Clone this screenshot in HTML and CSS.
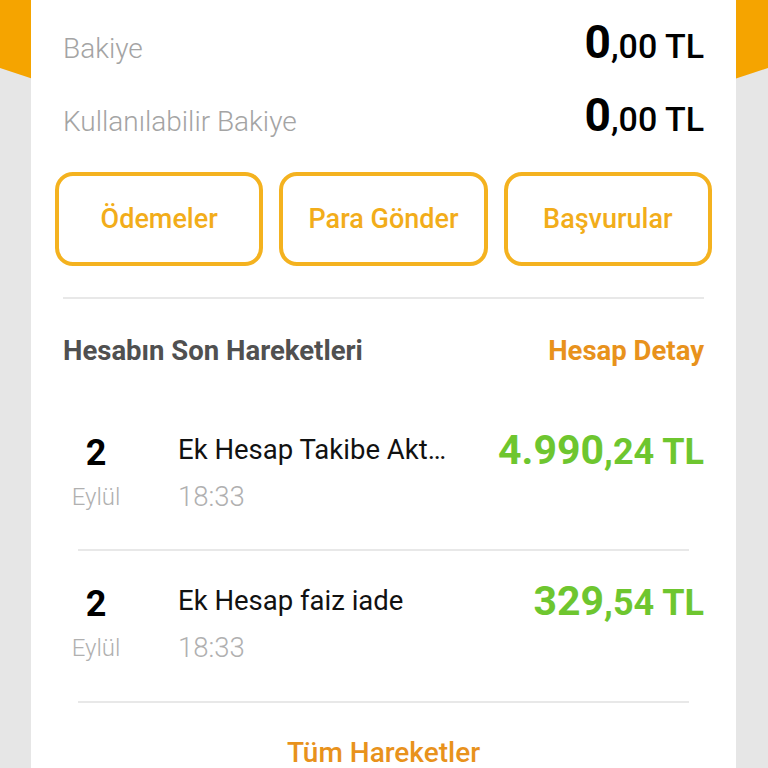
FILE: index.html
```html
<!DOCTYPE html>
<html lang="tr">
<head>
  <meta charset="UTF-8">
  <meta name="viewport" content="width=device-width, initial-scale=1.0">
  <title>Hesabım</title>
  <link rel="stylesheet" href="styles.css">
</head>
<body>
  <div class="band"></div>
  <div class="card">
    <div class="balance-row">
      <span class="label">Bakiye</span>
      <span class="amount"><span class="int">0</span>,00 TL</span>
    </div>
    <div class="balance-row">
      <span class="label">Kullanılabilir Bakiye</span>
      <span class="amount"><span class="int">0</span>,00 TL</span>
    </div>

    <div class="actions">
      <button class="action-btn">Ödemeler</button>
      <button class="action-btn">Para Gönder</button>
      <button class="action-btn">Başvurular</button>
    </div>

    <div class="divider"></div>

    <div class="section-head">
      <span class="section-title">Hesabın Son Hareketleri</span>
      <a class="link" href="#">Hesap Detay</a>
    </div>

    <div class="tx">
      <div class="tx-date">
        <div class="day">2</div>
        <div class="month">Eylül</div>
      </div>
      <div class="tx-info">
        <div class="tx-name">Ek Hesap Takibe Akt…</div>
        <div class="tx-time">18:33</div>
      </div>
      <div class="tx-amount"><span class="int">4.990</span>,24 TL</div>
    </div>
    <div class="tx-sep"></div>
    <div class="tx">
      <div class="tx-date">
        <div class="day">2</div>
        <div class="month">Eylül</div>
      </div>
      <div class="tx-info">
        <div class="tx-name">Ek Hesap faiz iade</div>
        <div class="tx-time">18:33</div>
      </div>
      <div class="tx-amount"><span class="int">329</span>,54 TL</div>
    </div>
    <div class="tx-sep"></div>

    <div class="all-link"><a class="link" href="#">Tüm Hareketler</a></div>
  </div>
</body>
</html>
```

FILE: styles.css
```css
body {
  margin: 0;
  background-color: #e6e6e6;
  font-family: Roboto, "Liberation Sans", sans-serif;
  position: relative;
  overflow: hidden;
  height: 768px;
}
.band {
  position: absolute;
  top: 0;
  left: 0;
  right: 0;
  height: 200px;
  background-color: #f5a400;
  clip-path: polygon(0 0, 100% 0, 100% 68px, 50% 195px, 0 68px);
}
.card {
  position: relative;
  margin: 0 32px 0 31px;
  background-color: #ffffff;
  padding: 19px 32px 40px;
  min-height: 760px;
}
.balance-row {
  display: flex;
  justify-content: space-between;
  align-items: baseline;
  height: 56px;
  line-height: 56px;
  margin-bottom: 17px;
}
.label {
  font-size: 28px;
  font-weight: 300;
  color: #a4a4a4;
}
.amount {
  font-size: 34px;
  font-weight: 500;
  line-height: 1;
  color: #000;
}
.amount .int {
  font-size: 46px;
  font-weight: 700;
}
.actions {
  display: grid;
  grid-template-columns: repeat(3, 1fr);
  gap: 16px;
  margin: 24px -8px 0;
}
.action-btn {
  height: 94px;
  background: #fff;
  border: 4px solid #f4b21f;
  border-radius: 18px;
  font-family: Roboto, "Liberation Sans", sans-serif;
  font-size: 27px;
  font-weight: 500;
  color: #f2ad1a;
  padding: 0;
}
.divider {
  height: 2px;
  background-color: #e8e8e8;
  margin-top: 31px;
}
.section-head {
  display: flex;
  justify-content: space-between;
  align-items: center;
  height: 34px;
  line-height: 34px;
  margin: 35px 0 32px;
}
.section-title {
  font-size: 27.5px;
  font-weight: 700;
  color: #505050;
}
.link {
  font-size: 27.5px;
  font-weight: 700;
  color: #e8921c;
  text-decoration: none;
}
.tx {
  display: flex;
  align-items: flex-start;
  padding: 32px 0 34px;
}
.tx-date {
  width: 66px;
  text-align: center;
  margin-right: 49px;
}
.day {
  font-size: 36px;
  font-weight: 700;
  line-height: 36px;
  padding-top: 3px;
  color: #000;
}
.month {
  font-size: 24px;
  font-weight: 300;
  line-height: 36px;
  margin-top: 8px;
  color: #b0b0b0;
}
.tx-info {
  flex: 1;
  min-width: 0;
}
.tx-name {
  font-size: 27.5px;
  line-height: 36px;
  color: #111;
  white-space: nowrap;
  overflow: hidden;
  text-overflow: ellipsis;
}
.tx-time {
  font-size: 27.5px;
  font-weight: 300;
  line-height: 36px;
  margin-top: 11px;
  color: #b0b0b0;
}
.tx-amount {
  font-size: 36px;
  font-weight: 700;
  line-height: 36px;
  color: #6ec62f;
  white-space: nowrap;
}
.tx-amount .int {
  font-size: 41px;
}
.tx-sep {
  height: 2px;
  background-color: #e8e8e8;
  margin: 0 15px;
}
.tx + .tx-sep + .tx {
  padding-bottom: 35px;
}
.all-link {
  text-align: center;
  height: 34px;
  line-height: 34px;
  margin-top: 33px;
}
.all-link .link {
  font-size: 28px;
  font-weight: 500;
}
```
